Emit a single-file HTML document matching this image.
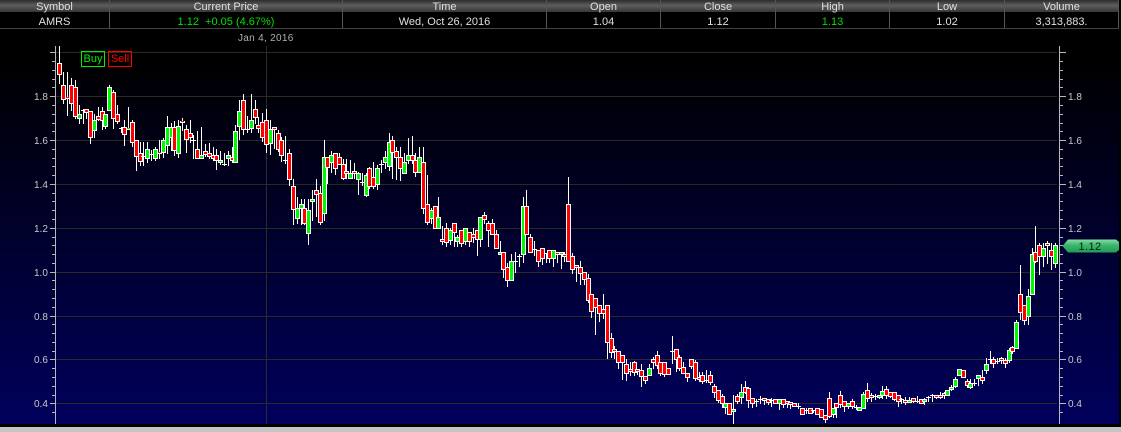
<!DOCTYPE html>
<html><head><meta charset="utf-8"><title>AMRS</title>
<style>
html,body{margin:0;padding:0;background:#000;width:1121px;height:432px;overflow:hidden}
body{position:relative;font-family:"Liberation Sans",Arial,sans-serif}
.hd{position:absolute;left:0;top:0;width:1119px;height:12px;background:linear-gradient(#2c2c2c,#5e5e5e 45%,#444 80%,#383838)}
.c{position:absolute;text-align:center;font-size:11px;line-height:12px;color:#e0e0e0;white-space:pre}
.sep{position:absolute;width:1px;background:#555;top:0;height:28px}
.rule{position:absolute;left:0;top:28px;width:1119px;height:1px;background:#444}
.chart{position:absolute;left:0;top:29px;width:1119px;height:395px;background:linear-gradient(#000 0,#000 30px,#00005c 100%)}
.strip{position:absolute;left:0;top:427px;width:1121px;height:5px;background:#c4c4c4}
.lab{position:absolute;font-size:10px;line-height:12px;color:#c8c8c8}
.btn{position:absolute;top:51px;height:14px;line-height:14px;font-size:11px;text-align:center;box-sizing:content-box}
svg{position:absolute;left:0;top:0}
</style></head><body>
<div class="chart"></div>
<div class="hd"></div>
<div class="sep" style="left:109px"></div><div class="sep" style="left:342px"></div><div class="sep" style="left:546px"></div><div class="sep" style="left:660px"></div><div class="sep" style="left:775px"></div><div class="sep" style="left:889px"></div><div class="sep" style="left:1004px"></div><div class="sep" style="left:1118px"></div>
<div class="rule"></div>
<div class="c" style="left:0;top:1px;width:109px">Symbol</div>
<div class="c" style="left:110px;top:1px;width:232px">Current Price</div>
<div class="c" style="left:343px;top:1px;width:203px">Time</div>
<div class="c" style="left:547px;top:1px;width:113px">Open</div>
<div class="c" style="left:661px;top:1px;width:114px">Close</div>
<div class="c" style="left:776px;top:1px;width:113px">High</div>
<div class="c" style="left:890px;top:1px;width:114px">Low</div>
<div class="c" style="left:1005px;top:1px;width:113px">Volume</div>
<div class="c" style="left:0;top:16px;width:109px">AMRS</div>
<div class="c" style="left:110px;top:16px;width:232px;color:#00e000">1.12  +0.05 (4.67%)</div>
<div class="c" style="left:343px;top:16px;width:203px">Wed, Oct 26, 2016</div>
<div class="c" style="left:547px;top:16px;width:113px">1.04</div>
<div class="c" style="left:661px;top:16px;width:114px">1.12</div>
<div class="c" style="left:776px;top:16px;width:113px;color:#00e000">1.13</div>
<div class="c" style="left:890px;top:16px;width:114px">1.02</div>
<div class="c" style="left:1005px;top:16px;width:113px">3,313,883.</div>
<svg id="s" width="1121" height="432" viewBox="0 0 1121 432" shape-rendering="crispEdges"></svg>
<div class="lab" style="left:238px;top:33px;letter-spacing:.3px;color:#b0b0b0">Jan 4, 2016</div>
<div class="btn" style="left:81px;width:22px;border:1px solid #00f000;color:#00f000">Buy</div>
<div class="btn" style="left:108px;width:22px;border:1px solid #f00;color:#f00">Sell</div>
<div class="lab" style="left:34px;top:92px">1.8</div><div class="lab" style="left:34px;top:136px">1.6</div><div class="lab" style="left:34px;top:180px">1.4</div><div class="lab" style="left:34px;top:224px">1.2</div><div class="lab" style="left:34px;top:268px">1.0</div><div class="lab" style="left:34px;top:312px">0.8</div><div class="lab" style="left:34px;top:355px">0.6</div><div class="lab" style="left:34px;top:399px">0.4</div>
<div class="lab" style="left:1068px;top:92px">1.8</div><div class="lab" style="left:1068px;top:136px">1.6</div><div class="lab" style="left:1068px;top:180px">1.4</div><div class="lab" style="left:1068px;top:224px">1.2</div><div class="lab" style="left:1068px;top:268px">1.0</div><div class="lab" style="left:1068px;top:312px">0.8</div><div class="lab" style="left:1068px;top:355px">0.6</div><div class="lab" style="left:1068px;top:399px">0.4</div>
<svg width="1121" height="432" viewBox="0 0 1121 432">
<defs><linearGradient id="g" x1="0" y1="0" x2="0" y2="1"><stop offset="0" stop-color="#86dca6"/><stop offset=".45" stop-color="#3cb56c"/><stop offset="1" stop-color="#1f9d52"/></linearGradient></defs>
<path d="M1062.5 246 L1068 239.5 H1116 L1119 242 V250 L1116 252.5 H1068 Z" fill="url(#g)"/>
<text x="1090" y="250" font-size="11" text-anchor="middle" fill="#04200f" letter-spacing=".4" font-family="Liberation Sans, Arial, sans-serif">1.12</text>
</svg>
<div class="strip"></div>
<script>
var D=[[59,46,63,74,83],[63,72,85,99,103],[67,72,97,98,115],[71,78,85,103,110],[75,80,87,116,118],[79,105,114,118,123,1],[83,109,110,110,123],[86,109,109,112,118],[90,111,111,137,143],[94,114,120,130,137,1],[98,107,116,119,120],[102,107,111,120,129],[105,114,114,126,128,1],[109,85,87,110,110,1],[113,90,92,118,128],[117,105,114,121,123],[121,127,128,128,132],[124,120,127,134,145],[128,107,128,129,128,1],[132,120,122,142,146],[136,140,140,156,170],[140,142,153,161,165],[143,142,156,156,165],[147,142,149,158,162,1],[151,150,154,154,160],[155,147,149,158,160,1],[159,140,152,153,158],[163,138,140,152,157,1],[167,116,127,145,153,1],[171,123,127,137,150,1],[174,121,127,150,155],[178,120,126,153,157,1],
[182,118,121,122,130],[186,125,129,139,152],[190,120,133,137,142],[193,135,140,140,158],[197,131,149,158,158],[201,127,155,158,158,1],[205,144,151,154,156],[209,143,153,156,158],[213,147,155,158,160],[216,149,155,160,169],[220,151,160,162,164,1],[224,153,164,164,165],[228,151,155,158,165,1],[232,147,157,160,162],[235,125,131,162,162,1],[239,100,111,126,139,1],[243,94,100,129,134],[247,116,129,129,132],[251,94,120,128,132,1],[255,100,109,117,123],[258,117,125,128,132],[262,113,122,137,141],[266,109,120,144,152],[270,120,129,143,154,1],[274,127,127,129,148],[278,130,133,149,151],[281,137,140,155,161],[285,136,160,160,163],[289,149,153,179,185],[293,179,186,209,224],[297,197,208,218,223,1],[301,199,204,208,224,1],[304,199,208,223,224],[308,199,210,233,244,1],[312,190,199,201,220,1],[316,179,190,194,216],[320,186,193,222,224],[324,140,157,213,220,1],[327,157,157,167,183],[331,151,155,162,172,1],[335,153,153,168,174],[339,153,157,164,164],[343,159,164,178,179],[346,159,171,173,178],[350,160,173,178,178,1],[354,163,171,173,178],[358,172,173,179,194,1],
[362,173,182,182,185],[366,173,175,195,196,1],[369,167,168,186,188],[373,162,177,186,188],[377,165,168,184,189,1],[381,160,164,164,172],[385,151,157,162,168,1],[389,133,142,166,170,1],[392,136,140,152,178],[396,147,151,157,179],[400,147,157,168,180],[404,153,162,173,173,1],[408,138,155,160,163,1],[412,136,155,160,163],[415,153,160,172,176],[419,147,157,172,172,1],[423,147,162,208,213],[427,175,204,222,224],[431,208,210,218,223,1],[435,206,206,228,228],[438,197,217,228,228,1],[442,226,239,241,244],[446,223,228,242,246],[450,228,230,240,244,1],[454,223,223,232,246],[457,235,237,241,246,1],[461,230,230,243,246],[465,228,228,241,244,1],[469,232,232,241,246],[473,228,234,237,242],[477,230,230,239,255],[480,217,217,239,246,1],[484,212,215,219,223],[488,221,223,230,246],[492,219,223,234,234],[496,230,234,248,248],[500,241,252,254,254,1],[503,252,252,269,277],[507,263,267,280,286],[511,254,261,280,280,1],[515,252,261,261,272],[519,254,256,256,266],[523,197,206,254,262,1],[526,190,206,234,234],[530,234,237,252,252],
[534,241,249,249,255],[538,250,250,261,266],[542,248,248,258,264],[546,253,253,253,262],[549,250,250,258,262],[553,250,250,258,266,1],[557,252,252,254,262],[561,252,252,254,268,1],[564,252,254,256,261],[568,177,204,261,261],[572,253,256,269,273],[576,265,265,267,281],[580,261,267,273,284],[584,272,272,279,284],[588,274,278,300,302],[591,294,294,311,317],[595,298,298,307,334],[599,305,305,313,321],[603,294,309,313,318],[607,305,305,342,358],[611,333,338,352,357],[614,346,349,351,358],[618,351,351,362,368],[622,355,355,362,379],[626,359,364,373,380],[630,362,369,371,375],[634,361,362,372,375],[637,369,369,371,374],
[641,364,370,376,386],[645,376,376,380,383],[649,364,368,375,375,1],[653,357,359,362,368],[657,351,355,365,368],[660,362,362,373,375],[664,362,362,374,376],[668,368,368,374,374],[672,336,351,351,363],[676,349,349,359,371],[679,355,357,368,370],[683,362,367,373,373],[687,373,373,377,381],[691,359,359,366,368],[695,360,362,378,380],[699,372,377,379,381],[702,372,375,381,383],[706,370,380,380,382],[710,371,375,382,384],[714,384,386,392,397],[718,390,390,400,402],[722,394,396,403,407],[725,403,403,407,413,1],[729,403,403,414,414],[733,395,409,411,423,1],[737,394,396,401,403],[741,384,392,397,403,1],[745,381,387,392,393],[748,387,388,400,407],[752,398,398,403,407],[756,399,401,401,406],[760,396,399,399,403],[764,398,398,400,404],[768,399,399,402,404],[771,398,400,400,406],[775,399,399,403,403],[779,399,399,403,409,1],[783,399,399,404,407],[787,401,401,403,407],[790,402,402,404,408],[794,403,403,406,406],[798,403,406,406,408],[802,408,408,414,414],[806,408,410,410,413],[810,408,408,413,413],[813,410,410,410,412],[817,408,408,414,414],[821,409,409,417,417],[825,415,415,419,422],[829,392,398,416,417],[833,408,408,414,417,1],[836,403,403,407,417],[840,391,395,404,407],
[844,401,401,406,411],[848,403,403,406,408,1],[852,399,401,406,408],[856,405,407,407,409],[859,407,407,410,410,1],[863,392,394,408,408,1],[867,383,390,398,401],[871,393,395,397,401],[875,394,396,396,399],[879,395,395,397,398,1],[882,386,391,395,398,1],[886,386,389,395,398],[890,392,392,396,397],[894,392,392,399,400],[898,395,395,401,406],[901,398,399,399,403],[905,397,400,402,404],[909,397,400,402,402,1],[913,398,398,401,402],[917,396,401,401,402],[921,399,399,403,403],[924,398,399,401,404,1],[928,396,397,397,401],[932,394,395,395,401],[936,395,395,397,398],[940,392,395,397,398],[944,392,393,395,398],[947,390,390,395,395,1],[951,385,387,389,390,1],[955,377,379,386,387,1],[959,369,369,375,375,1],[963,370,370,377,377],[967,379,381,385,387],[970,379,383,387,388,1],[974,379,383,383,385],[978,375,375,378,385,1],[982,370,377,380,383],[986,358,364,370,373,1],[990,351,359,359,363],[993,357,359,363,367],[997,358,361,361,363],[1001,357,358,360,363],[1005,358,360,363,367],[1009,348,350,360,362,1],[1012,346,347,351,353],[1016,320,322,348,348,1],[1020,265,294,312,319],[1024,305,305,320,324],[1028,289,296,316,324,1],[1032,248,254,294,294,1],[1035,226,252,261,262],[1039,243,245,256,274],[1043,243,248,256,266,1],[1047,241,243,245,263],[1051,243,250,256,269],[1055,243,245,263,267,1]];
var o=[];
function r(x,y,w,h,f){o.push('<rect x="'+x+'" y="'+y+'" width="'+w+'" height="'+h+'" fill="'+f+'"/>')}
var G=[52,96,140,184,228,272,316,359,403];
G.forEach(function(y){r(56,y,1001,1,'#2a2a24')});
r(266,46,1,378,'#2c2c2c');
r(55,46,1,378,'#b8b8b8');r(1059,46,1,378,'#b8b8b8');
for(var k=0;k<42;k++){var y=Math.round(52.3+8.775*k);if(y>423)break;var m=k%5==0;r(m?50:52,y,m?5:3,1,'#b8b8b8');r(1060,y,m?6:3,1,'#b8b8b8')}
D.forEach(function(d){var x=d[0],c=d[5]?'#00f800':'#ff0000';
r(x,d[1],1,d[4]-d[1]+1,'#fff');
var h=d[3]-d[2]+1;
if(d[2]==d[3]){r(x-2,d[2],5,1,'#fff');return}
r(x-2,d[2],5,h,'#fff');
if(h>2)r(x-1,d[2]+1,3,h-2,c);else r(x-1,d[2],3,1,c);
});
document.getElementById('s').innerHTML=o.join('');
</script>
</body></html>
